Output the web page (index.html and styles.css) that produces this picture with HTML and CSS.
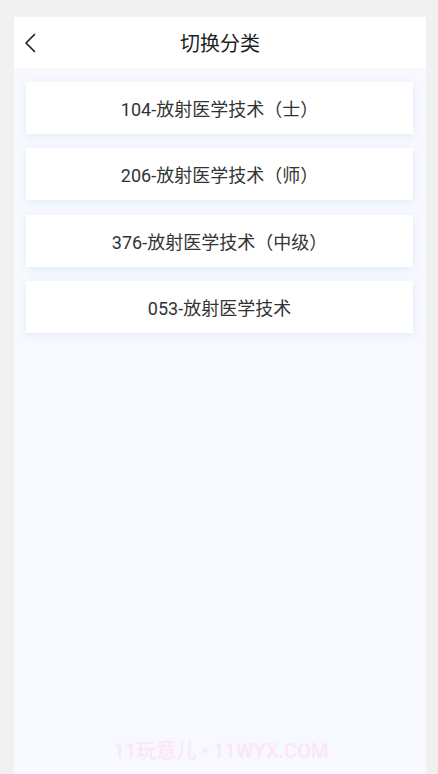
FILE: index.html
```html
<!DOCTYPE html>
<html lang="zh">
<head>
<meta charset="utf-8">
<title>切换分类</title>
<link rel="stylesheet" href="styles.css">
</head>
<body>
<div class="frame">
  <header class="nav">
    <span class="back">
      <svg width="12" height="20" viewBox="0 0 12 20"><path d="M10.5 1.5 L2 10 L10.5 18.5" fill="none" stroke="#222" stroke-width="1.7" stroke-linecap="round" stroke-linejoin="round"/></svg>
    </span>
    <h1 class="title">切换分类</h1>
  </header>
  <main class="list">
    <div class="card">104-放射医学技术（士）</div>
    <div class="card">206-放射医学技术（师）</div>
    <div class="card">376-放射医学技术（中级）</div>
    <div class="card">053-放射医学技术</div>
  </main>
  <div class="watermark">11玩意儿 • 11WYX.COM</div>
</div>
</body>
</html>
```
FILE: styles.css
```css
html, body {
  margin: 0;
  padding: 0;
  height: 100%;
}
body {
  background: #f1f1f1;
  font-family: "Noto Sans CJK SC", "Noto Sans", sans-serif;
  color: #333;
  overflow: hidden;
}
.frame {
  margin: 17px 12px 0 14px;
  height: calc(100% - 17px);
  background: #f7f9fe;
  display: flex;
  flex-direction: column;
  position: relative;
}
.nav {
  height: 51px;
  background: #fff;
  display: flex;
  align-items: center;
  justify-content: center;
  position: relative;
  flex-shrink: 0;
}
.back {
  position: absolute;
  left: 10px;
  top: 16px;
  display: flex;
}
.title {
  margin: 0;
  font-size: 20px;
  font-weight: 400;
  color: #1f1f1f;
  line-height: 1;
}
.list {
  padding: 14px 13px 0 12px;
  display: flex;
  flex-direction: column;
  gap: 14.3px;
}
.card {
  height: 52px;
  background: #fff;
  display: flex;
  align-items: center;
  justify-content: center;
  font-family: Roboto, "Noto Sans CJK SC", sans-serif;
  font-size: 18px;
  color: #333;
  box-shadow: 0 2px 9px rgba(120, 160, 220, 0.16);
}
.watermark {
  position: absolute;
  left: 0;
  right: 0;
  bottom: 10px;
  text-align: center;
  font-family: Roboto, "Noto Sans CJK SC", sans-serif;
  font-size: 20px;
  font-weight: 500;
  color: #fce6f8;
  padding-left: 2px;
}
```
